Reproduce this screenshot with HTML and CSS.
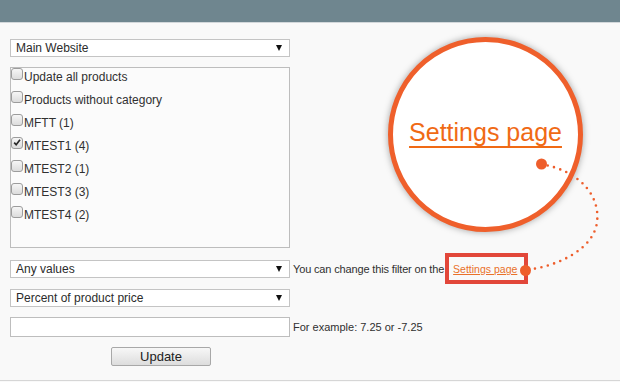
FILE: index.html
```html
<!DOCTYPE html>
<html>
<head>
<meta charset="utf-8">
<link rel="stylesheet" href="styles.css">
</head>
<body>
<div class="topbar"></div>
<main class="page">
  <div class="form">
    <div class="select first"><span>Main Website</span><i class="arrow"></i></div>
    <div class="listbox">
      <label class="opt"><span class="cb"></span><span class="lbl">Update all products</span></label>
      <label class="opt"><span class="cb"></span><span class="lbl">Products without category</span></label>
      <label class="opt"><span class="cb"></span><span class="lbl">MFTT (1)</span></label>
      <label class="opt"><span class="cb checked"><svg viewBox="0 0 12 12"><path d="M2.6 6.2 L5 8.6 L9.6 2.8" fill="none" stroke="#2a2a2a" stroke-width="2"/></svg></span><span class="lbl">MTEST1 (4)</span></label>
      <label class="opt"><span class="cb"></span><span class="lbl">MTEST2 (1)</span></label>
      <label class="opt"><span class="cb"></span><span class="lbl">MTEST3 (3)</span></label>
      <label class="opt"><span class="cb"></span><span class="lbl">MTEST4 (2)</span></label>
    </div>
    <div class="row filter-row">
      <div class="select"><span>Any values</span><i class="arrow"></i></div>
      <span class="hint tight">You can change this filter on the <a class="link">Settings page</a></span>
    </div>
    <div class="select price"><span>Percent of product price</span><i class="arrow"></i></div>
    <div class="row input-row">
      <div class="input"></div>
      <span class="hint">For example: 7.25 or -7.25</span>
    </div>
    <button class="btn">Update</button>
  </div>
</main>
<div class="callout"><span class="callout-text">Settings page</span></div>
<svg class="overlay" width="620" height="382" viewBox="0 0 620 382">
  <rect x="447" y="255" width="79" height="27" fill="none" stroke="#e2473a" stroke-width="4"/>
  <path d="M541 164 C 585 172, 600 200, 597 222 C 594 248, 560 266, 526 270" fill="none" stroke="#ee5e2c" stroke-width="2.6" stroke-linecap="round" stroke-dasharray="0 6.6"/>
  <circle cx="541.5" cy="164" r="5.5" fill="#ee5e2c"/>
  <circle cx="525.5" cy="270.5" r="5.5" fill="#ee5e2c"/>
</svg>
</body>
</html>
```
FILE: styles.css
```css
html, body {
  margin: 0;
  padding: 0;
}
body {
  position: relative;
  width: 620px;
  height: 382px;
  overflow: hidden;
  background: #f9f9f9;
  font-family: "Liberation Sans", Arial, sans-serif;
  color: #303030;
}
.topbar {
  height: 22px;
  background: #6f868f;
  border-bottom: 1px solid #d3d8db;
}
.page {
  height: 358px;
  border-bottom: 1px solid #d6d6d6;
  padding: 16px 0 0 10px;
  box-sizing: border-box;
}
.form {
  width: 280px;
  display: flex;
  flex-direction: column;
  align-items: flex-start;
}
.select {
  width: 280px;
  height: 18px;
  box-sizing: border-box;
  border: 1px solid #c4c4c4;
  background: #fff;
  display: flex;
  align-items: center;
  justify-content: space-between;
  padding: 0 7px 0 5px;
  font-size: 12px;
  color: #2b2b2b;
  flex-shrink: 0;
}
.arrow {
  width: 0;
  height: 0;
  border-top: 6px solid #111;
  border-left: 3.5px solid transparent;
  border-right: 3.5px solid transparent;
}
.listbox {
  margin-top: 10px;
  width: 280px;
  height: 181px;
  box-sizing: border-box;
  border: 1px solid #bdbdbd;
  background: #fbfbfb;
  display: flex;
  flex-direction: column;
}
.opt {
  height: 23px;
  display: flex;
  align-items: flex-start;
  font-size: 12px;
}
.cb {
  width: 12px;
  height: 12px;
  box-sizing: border-box;
  border: 1px solid #9c9c9c;
  border-radius: 3px;
  background: linear-gradient(#f6f6f6, #dcdcdc);
  margin-top: 0;
  flex-shrink: 0;
  display: flex;
}
.cb svg {
  width: 11px;
  height: 11px;
  margin: -1px 0 0 0;
}
.lbl {
  line-height: 15px;
  padding-top: 2px;
  margin-left: 1px;
}
.row {
  display: flex;
  align-items: center;
  width: 620px;
}
.filter-row {
  margin-top: 12px;
}
.hint {
  font-size: 11px;
  margin-left: 3px;
  white-space: nowrap;
}
.tight {
  letter-spacing: -0.15px;
}
.link {
  font-size: 10.5px;
  letter-spacing: 0;
  color: #e9712a;
  text-decoration: underline;
  margin-left: 6px;
}
.price {
  margin-top: 11px;
}
.input-row {
  margin-top: 10px;
}
.input {
  width: 280px;
  height: 20px;
  box-sizing: border-box;
  border: 1px solid #bdbdbd;
  background: #fff;
  flex-shrink: 0;
}
.btn {
  margin: 10px 0 0 101px;
  width: 100px;
  height: 19px;
  padding: 0;
  border: 1px solid #a8a8a8;
  border-radius: 2px;
  background: linear-gradient(#f7f7f7, #dddddd);
  font-family: "Liberation Sans", Arial, sans-serif;
  font-size: 13px;
  color: #222;
  line-height: 17px;
}
.callout {
  position: absolute;
  left: 388px;
  top: 37px;
  width: 195px;
  height: 195px;
  box-sizing: border-box;
  border: 5px solid #ef5f2b;
  border-radius: 50%;
  background: #fff;
  box-shadow: 0 0 7px rgba(0, 0, 0, 0.35);
  display: flex;
  align-items: center;
  justify-content: center;
}
.callout-text {
  font-size: 25px;
  color: #f06a15;
  text-decoration: underline;
  text-decoration-thickness: 2px;
  text-underline-offset: 5px;
  margin-bottom: 4px;
}
.overlay {
  position: absolute;
  left: 0;
  top: 0;
  pointer-events: none;
}
```
